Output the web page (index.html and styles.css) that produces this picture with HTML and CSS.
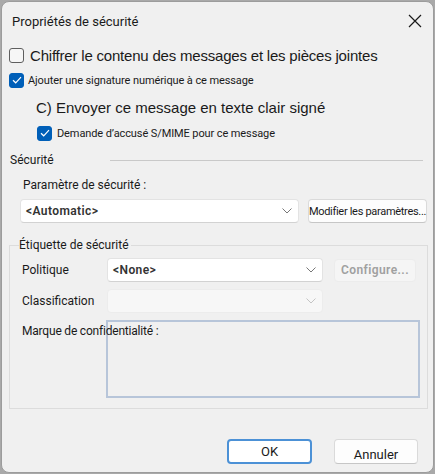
FILE: index.html
```html
<!DOCTYPE html>
<html lang="fr">
<head>
    <meta charset="UTF-8">
    <title>Propriétés de sécurité</title>
    <link rel="stylesheet" href="styles.css">
</head>
<body>
    <div class="window">
        <div class="titlebar">
            <span class="title">Propriétés de sécurité</span>
            <svg class="close" width="14" height="14" viewBox="0 0 14 14">
                <path d="M1 1L13 13M13 1L1 13" stroke="#1a1a1a" stroke-width="1.2" fill="none"/>
            </svg>
        </div>

        <div class="row row-encrypt">
            <span class="check"></span>
            <span class="big tight">Chiffrer le contenu des messages et les pièces jointes</span>
        </div>
        <div class="row row-sign">
            <span class="check on">
                <svg width="10" height="8" viewBox="0 0 10 8"><path d="M1 4.2L3.7 6.8L9 1.2" stroke="#fff" stroke-width="1.2" fill="none"/></svg>
            </span>
            <span class="small">Ajouter une signature numérique à ce message</span>
        </div>
        <div class="row row-clear">
            <span class="big">C) Envoyer ce message en texte clair signé</span>
        </div>
        <div class="row row-receipt">
            <span class="check on">
                <svg width="10" height="8" viewBox="0 0 10 8"><path d="M1 4.2L3.7 6.8L9 1.2" stroke="#fff" stroke-width="1.2" fill="none"/></svg>
            </span>
            <span class="small">Demande d’accusé S/MIME pour ce message</span>
        </div>

        <div class="section-head">
            <span>Sécurité</span>
            <span class="rule"></span>
        </div>
        <div class="field-label">Paramètre de sécurité :</div>
        <div class="setting-row">
            <div class="select wide">
                <span>&lt;Automatic&gt;</span>
                <svg class="chev" width="10" height="6" viewBox="0 0 10 6"><path d="M0.5 0.5L5 5L9.5 0.5" stroke="#777" fill="none"/></svg>
            </div>
            <div class="btn modify">Modifier les paramètres...</div>
        </div>

        <div class="group">
            <span class="legend">Étiquette de sécurité</span>
            <div class="grid">
                <span class="lbl">Politique</span>
                <div class="select">
                    <span>&lt;None&gt;</span>
                    <svg class="chev" width="10" height="6" viewBox="0 0 10 6"><path d="M0.5 0.5L5 5L9.5 0.5" stroke="#777" fill="none"/></svg>
                </div>
                <div class="btn disabled">Configure...</div>

                <span class="lbl">Classification</span>
                <div class="select off">
                    <span></span>
                    <svg class="chev" width="10" height="6" viewBox="0 0 10 6"><path d="M0.5 0.5L5 5L9.5 0.5" stroke="#c4c4c4" fill="none"/></svg>
                </div>
                <span></span>

                <div class="textbox"></div>
                <span class="lbl mark">Marque de confidentialité :</span>
            </div>
        </div>

        <div class="footer">
            <div class="btn ok">OK</div>
            <div class="btn cancel">Annuler</div>
        </div>
    </div>
</body>
</html>
```

FILE: styles.css
```css
html, body {
    margin: 0;
    padding: 0;
}
body {
    background: #a9a9a9;
    font-family: Roboto, "Liberation Sans", sans-serif;
    color: #1a1a1a;
    width: 435px;
    height: 474px;
    overflow: hidden;
}
.window {
    box-sizing: border-box;
    margin: 1px 1px 0 1px;
    width: 433px;
    height: 472px;
    background: #f0f0f0;
    border: 1px solid #9c9c9c;
    border-radius: 8px;
    position: relative;
}
.titlebar {
    height: 38px;
    display: flex;
    align-items: center;
    justify-content: space-between;
    padding: 0 11px 0 10px;
}
.title {
    font-size: 13px;
}
.row {
    display: flex;
    align-items: center;
}
.row-encrypt {
    height: 16px;
    margin-top: 7px;
    padding-left: 7px;
    gap: 6px;
}
.row-sign {
    height: 16px;
    margin-top: 9px;
    padding-left: 7px;
    gap: 4px;
}
.row-clear {
    height: 18px;
    margin-top: 10px;
    padding-left: 34px;
}
.row-receipt {
    height: 16px;
    margin-top: 9px;
    padding-left: 35px;
    gap: 5px;
}
.big {
    font-family: "Liberation Sans", Arial, sans-serif;
    font-size: 15px;
}
.big.tight {
    letter-spacing: -0.2px;
}
.small {
    font-size: 11px;
    letter-spacing: -0.1px;
}
.check {
    box-sizing: border-box;
    width: 15px;
    height: 15px;
    border: 1px solid #5e5e5e;
    border-radius: 3px;
    background: #f6f6f6;
    display: flex;
    align-items: center;
    justify-content: center;
    flex: none;
}
.check.on {
    background: #005fb8;
    border-color: #005fb8;
}
.section-head {
    display: flex;
    align-items: center;
    margin-top: 11px;
    padding-left: 8px;
    font-size: 12px;
    height: 16px;
}
.section-head .rule {
    flex: 1;
    height: 1px;
    background: #c9c9c9;
    margin-left: 56px;
    margin-right: 10px;
}
.field-label {
    font-size: 12px;
    margin-top: 10px;
    padding-left: 21px;
    height: 16px;
}
.setting-row {
    display: flex;
    gap: 9px;
    margin-top: 5px;
    padding-left: 18px;
}
.select {
    box-sizing: border-box;
    height: 24px;
    background: #fff;
    border: 1px solid #e3e3e3;
    border-bottom-color: #d2d2d2;
    border-radius: 4px;
    display: flex;
    align-items: center;
    justify-content: space-between;
    padding: 0 6px 0 5px;
    font-size: 12px;
    font-weight: 600;
    color: #333;
    letter-spacing: 0.4px;
}
.select.wide {
    width: 279px;
}
.select.off {
    background: #f7f7f7;
    border-color: #ececec;
}
.btn {
    box-sizing: border-box;
    height: 24px;
    background: #fdfdfd;
    border: 1px solid #dadada;
    border-bottom-color: #c6c6c6;
    border-radius: 4px;
    display: flex;
    align-items: center;
    justify-content: center;
    font-size: 11px;
    white-space: nowrap;
}
.btn.modify {
    width: 119px;
    letter-spacing: -0.3px;
}
.btn.disabled {
    width: 82px;
    background: #f5f5f5;
    border-color: #ececec;
    color: #a0a0a0;
    font-size: 12px;
    font-weight: 600;
    letter-spacing: 0.4px;
    height: 23px;
}
.group {
    box-sizing: border-box;
    margin: 22px 0 0 7px;
    width: 419px;
    height: 164px;
    border: 1px solid #dcdcdc;
    position: relative;
    padding: 12px 0 0 12px;
}
.legend {
    position: absolute;
    top: -8px;
    left: 9px;
    font-size: 12px;
    background: #f0f0f0;
    padding-right: 2px;
}
.grid {
    display: grid;
    grid-template-columns: 75px 216px 82px;
    grid-template-rows: 24px 24px auto;
    row-gap: 7px;
    column-gap: 10px;
    align-items: center;
}
.grid .btn.disabled {
    margin-left: 1px;
}
.lbl {
    font-size: 12px;
    color: #1a1a1a;
}
.lbl.mark {
    grid-row: 3;
    grid-column: 1 / 3;
    align-self: start;
    margin-top: 4px;
    letter-spacing: -0.2px;
    white-space: nowrap;
    position: relative;
}
.textbox {
    grid-row: 3;
    grid-column: 2 / 4;
    box-sizing: border-box;
    height: 78px;
    width: 314px;
    margin-left: -1px;
    border: 2px solid #b7c5d9;
    background: #f0f0f0;
}
.footer {
    position: absolute;
    left: 0;
    right: 0;
    bottom: 8px;
    display: flex;
    justify-content: flex-end;
    gap: 22px;
    padding-right: 15px;
}
.btn.ok {
    width: 85px;
    height: 25px;
    border: 2px solid #4c91d6;
    background: #fff;
    font-size: 13px;
}
.btn.cancel {
    width: 84px;
    height: 25px;
    font-size: 13px;
    padding-top: 5px;
}
```
